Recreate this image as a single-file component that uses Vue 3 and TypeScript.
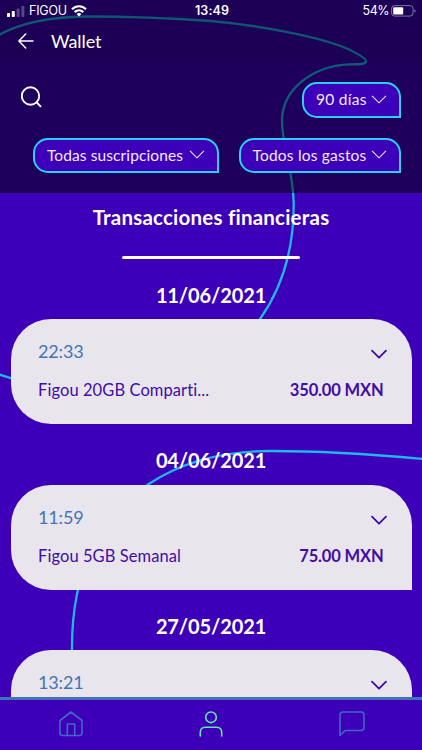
<script setup lang="ts">
interface Transaction {
  date: string
  time: string
  name?: string
  amount?: string
}

const transactions: Transaction[] = [
  { date: '11/06/2021', time: '22:33', name: 'Figou 20GB Comparti...', amount: '350.00 MXN' },
  { date: '04/06/2021', time: '11:59', name: 'Figou 5GB Semanal', amount: '75.00 MXN' },
  { date: '27/05/2021', time: '13:21' },
]
</script>

<template>
  <div class="screen">
    <svg class="backdrop" viewBox="0 0 422 750" fill="none" stroke="#20b7ee" stroke-width="2.3">
      <path d="M-2 35.5C25 20 60 16.5 90 16.5C130 16.5 175 18.5 211 21C265 26 325 38 350 50C362 56 366 59 366 61C366 65 358 64 350 64.300C309 66 282 92 282 121C282 146 293 168 293.700 203C294 245 284 285 260 319C215 375 95 410 -2 374" />
      <path d="M424 459C370 454 318 451 270 451C220 451 180 463 148 484.500C99 520 71 570 72 652" />
    </svg>

    <header class="top">
      <div class="status">
        <div class="carrier">
          <svg width="18" height="11" viewBox="0 0 18 11" fill="#fff">
            <rect x="0" y="7" width="3" height="4" rx=".7" />
            <rect x="4.800" y="5" width="3" height="6" rx=".7" />
            <rect x="9.600" y="2.500" width="3" height="8.500" rx=".7" opacity=".27" />
            <rect x="14.400" y="0" width="3" height="11" rx=".7" opacity=".27" />
          </svg>
          <span class="operator">FIGOU</span>
          <svg width="16" height="12" viewBox="0 0 16 12" fill="none" stroke="#fff" stroke-width="2.200">
            <path d="M1 4.300C5 .2 11 .2 15 4.300M3.700 7.100C6.200 4.700 9.800 4.700 12.300 7.100" />
            <path d="M5.600 9C7 7.700 9 7.700 10.400 9L8 11.500Z" fill="#fff" stroke="none" />
          </svg>
        </div>
        <span class="clock">13:49</span>
        <div class="battery">
          <span>54%</span>
          <svg width="26" height="12" viewBox="0 0 26 12">
            <rect x=".6" y=".6" width="21.500" height="10.500" rx="3" fill="none" stroke="#fff" stroke-opacity=".45" />
            <rect x="2.200" y="2.200" width="10" height="7.300" rx="1" fill="#fff" />
            <path d="M23.500 4.200Q26 5.900 23.500 7.600Z" fill="#fff" opacity=".5" />
          </svg>
        </div>
      </div>
      <div class="titlebar">
        <svg width="16" height="16" viewBox="0 0 16 16" fill="none" stroke="#fff" stroke-width="1.500" stroke-linecap="round" stroke-linejoin="round">
          <path d="M15 8H1M7.700 1L.9 8L7.700 15" />
        </svg>
        <h1>Wallet</h1>
      </div>
    </header>

    <section class="filters">
      <div class="filter-row">
        <svg class="search" width="22" height="22" viewBox="0 0 22 22" fill="none" stroke="#fff" stroke-width="1.900" stroke-linecap="round">
          <circle cx="9.500" cy="10" r="8.700" />
          <path d="M15.800 16.500L19.500 20.300" />
        </svg>
        <button class="chip days">
          <span>90 días</span>
          <svg width="16" height="9" viewBox="0 0 16 9"><path d="M1 .8L8 7.800L15 .8" /></svg>
        </button>
      </div>
      <div class="filter-row second">
        <button class="chip subs">
          <span>Todas suscripciones</span>
          <svg width="16" height="9" viewBox="0 0 16 9"><path d="M1 .8L8 7.800L15 .8" /></svg>
        </button>
        <button class="chip costs">
          <span>Todos los gastos</span>
          <svg width="16" height="9" viewBox="0 0 16 9"><path d="M1 .8L8 7.800L15 .8" /></svg>
        </button>
      </div>
    </section>

    <main class="content">
      <h2>Transacciones financieras</h2>
      <div class="rule"></div>
      <section v-for="item in transactions" :key="item.date" class="group">
        <h3>{{ item.date }}</h3>
        <article class="card">
          <div class="line">
            <span class="time">{{ item.time }}</span>
            <svg class="expand" width="18" height="11" viewBox="0 0 18 11"><path d="M2 1.600L9 8.700L16 1.600" /></svg>
          </div>
          <div v-if="item.name" class="line detail">
            <span class="name">{{ item.name }}</span>
            <span class="amount">{{ item.amount }}</span>
          </div>
        </article>
      </section>
    </main>

    <nav class="tabs">
      <svg width="24" height="26" viewBox="0 0 24 26">
        <path d="M1 9.500L12 1L23 9.500V22Q23 24.500 20.500 24.500H3.500Q1 24.500 1 22ZM8.300 24.500V13H15.700V24.500" />
      </svg>
      <svg class="active" width="24" height="26" viewBox="0 0 24 26">
        <circle cx="12" cy="6.300" r="5.300" />
        <path d="M1.300 25V21.500Q1.300 16.300 6.500 16.300H17.500Q22.700 16.300 22.700 21.500V25" />
      </svg>
      <svg width="26" height="26" viewBox="0 0 26 26">
        <path d="M1 24.500V4Q1 1 4 1H22Q25 1 25 4V16.500Q25 19.500 22 19.500H6Z" />
      </svg>
    </nav>
  </div>
</template>

<style>
body {
  margin: 0;
  overflow: hidden;
}
</style>

<style scoped>
.screen {
  position: relative;
  display: flex;
  flex-direction: column;
  height: 750px;
  overflow: hidden;
  background: #3d00b8;
  color: #fff;
  font-family: Lato, "Noto Sans", sans-serif;
  font-variant-ligatures: none;
}
.backdrop {
  position: absolute;
  inset: 0;
  width: 100%;
  height: 100%;
}
.top,
.filters,
.content,
.tabs {
  position: relative;
  box-sizing: border-box;
  flex-shrink: 0;
}
.top {
  height: 61px;
  background: rgba(0, 0, 0, 0.53);
}
.status {
  display: grid;
  grid-template-columns: 1fr auto 1fr;
  align-items: center;
  height: 22px;
  padding: 0 5px 0 7px;
  font: 12.5px/22px Inter, sans-serif;
}
.carrier,
.battery {
  display: flex;
  align-items: center;
  gap: 4px;
}
.battery {
  justify-content: flex-end;
  gap: 2px;
}
.operator {
  letter-spacing: -0.2px;
}
.battery span {
  letter-spacing: -0.5px;
}
.clock {
  font-weight: 600;
  font-size: 12.5px;
  letter-spacing: 0.1px;
}
.titlebar {
  display: flex;
  align-items: center;
  gap: 17px;
  height: 38px;
  padding-left: 18px;
}
h1,
h2,
h3 {
  margin: 0;
}
h1 {
  font-size: 18px;
  line-height: 22px;
  font-weight: 400;
  letter-spacing: -0.1px;
}
.filters {
  height: 132px;
  padding: 21px 21px 0;
  background: rgba(0, 0, 0, 0.5);
}
.filter-row {
  display: flex;
  justify-content: space-between;
  height: 35px;
}
.second {
  margin-top: 20.5px;
  padding-left: 12px;
}
.search {
  margin-top: 4px;
}
.chip {
  display: flex;
  align-items: center;
  justify-content: space-between;
  box-sizing: border-box;
  height: 35.5px;
  padding: 0 12px 1px;
  border: 2px solid #29d2f5;
  border-radius: 15px 15px 0 15px;
  background: #3d00b8;
  color: #f3eaff;
  font: 15.5px/20px Lato, sans-serif;
  letter-spacing: 0.1px;
  white-space: nowrap;
}
.chip path {
  fill: none;
  stroke: #f3eaff;
  stroke-width: 1.1;
}
.days {
  width: 99px;
}
.days span {
  letter-spacing: 0.3px;
}
.subs {
  width: 185.5px;
}
.costs {
  width: 162.5px;
}
.costs span {
  letter-spacing: 0.2px;
}
.content {
  height: 504px;
  overflow: hidden;
  padding: 11px 10.5px 0;
}
h2 {
  text-align: center;
  font-size: 20.5px;
  line-height: 26px;
  font-weight: 700;
  letter-spacing: 0.22px;
}
.rule {
  width: 178px;
  height: 3px;
  margin: 25.5px auto 0;
  border-radius: 2px;
  background: #fff;
}
.group {
  height: 165.7px;
}
.group h3 {
  padding-top: 23px;
  height: 37.5px;
  text-align: center;
  font-size: 20px;
  line-height: 27px;
  font-weight: 700;
  letter-spacing: -0.12px;
}
.card {
  box-sizing: border-box;
  height: 105px;
  padding: 20px 28px 0 27.5px;
  border-radius: 40px 40px 0 40px;
  background: #e8e6ec;
}
.line {
  display: flex;
  justify-content: space-between;
  height: 24px;
  line-height: 24px;
}
.time {
  color: #4275b6;
  font-size: 18px;
  letter-spacing: -0.15px;
}
.expand {
  margin: 10px -4.5px 0 0;
}
.expand path {
  fill: none;
  stroke: #3e0ba8;
  stroke-width: 1.8;
  stroke-linecap: round;
  stroke-linejoin: round;
}
.detail {
  margin-top: 15px;
  color: #430ba7;
  font-size: 16.5px;
}
.name {
  letter-spacing: 0.08px;
}
.amount {
  font-weight: 700;
  letter-spacing: -0.15px;
}
.tabs {
  display: flex;
  justify-content: space-between;
  height: 53px;
  padding: 11px 57.5px 0 58.5px;
  border-top: 3.5px solid #4271b7;
  background: #3d00b8;
}
.tabs svg {
  fill: none;
  stroke: #3e68c4;
  stroke-width: 1.6;
  stroke-linecap: round;
  stroke-linejoin: round;
}
.tabs .active {
  stroke: #62e8b4;
}
</style>
